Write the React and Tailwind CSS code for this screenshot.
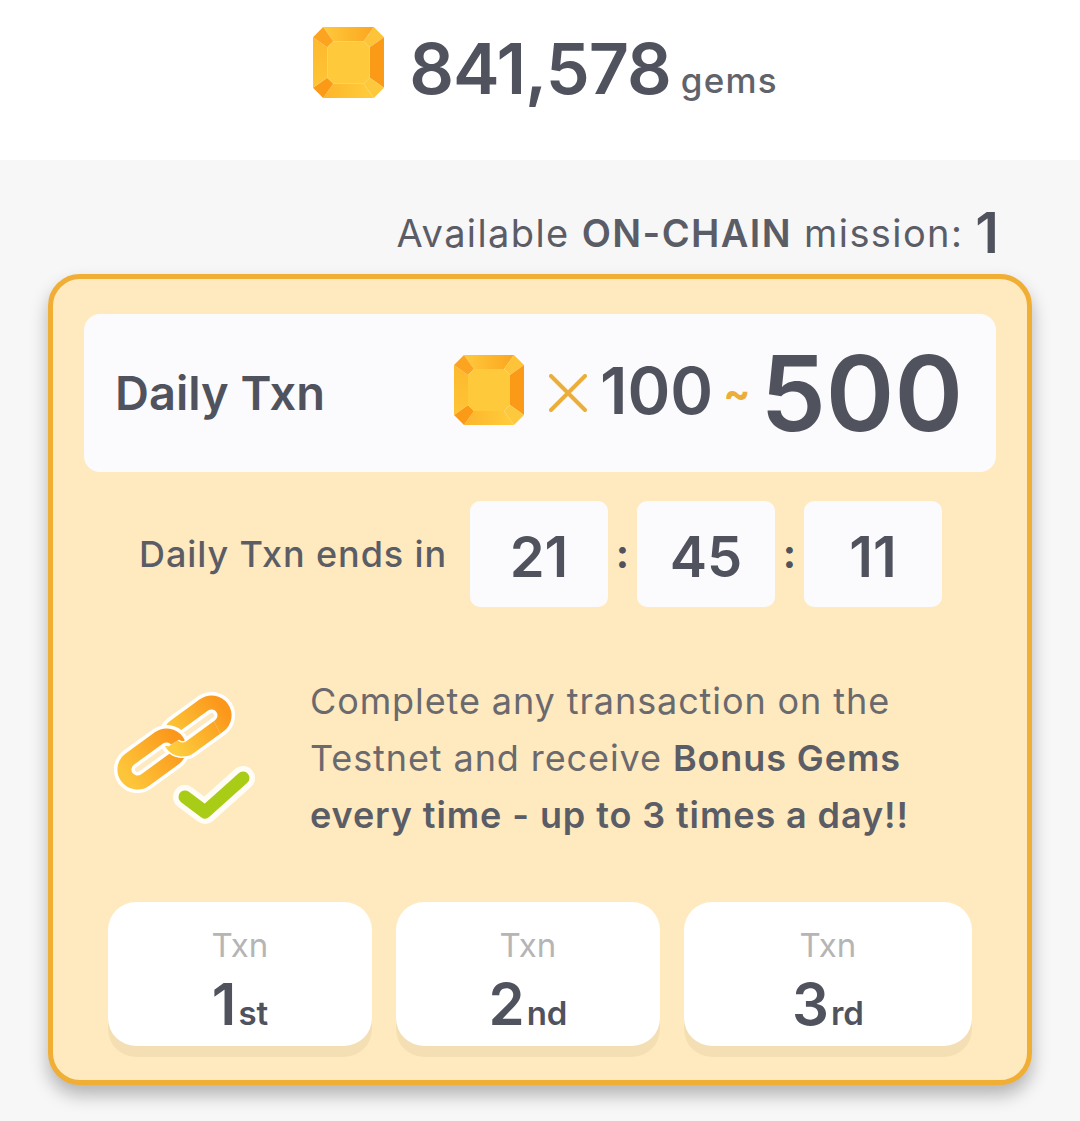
const FONT = "font-['Inter','Noto_Sans',sans-serif]";

function Gem({ className, id }) {
  return (
    <svg viewBox="0 0 70 70" className={className}>
      <defs>
        <linearGradient id={id + "t"} x1="0" x2="1" y1="0" y2="0">
          <stop offset="0" stopColor="#ffc93c" />
          <stop offset="1" stopColor="#fba61f" />
        </linearGradient>
        <linearGradient id={id + "b"} x1="0" x2="1" y1="0" y2="0">
          <stop offset="0" stopColor="#fdb52b" />
          <stop offset="1" stopColor="#ffcd3d" />
        </linearGradient>
        <linearGradient id={id + "l"} x1="0" x2="0" y1="0" y2="1">
          <stop offset="0" stopColor="#fdb92d" />
          <stop offset="1" stopColor="#ffc436" />
        </linearGradient>
      </defs>
      <polygon points="10,0 60,0 50,14 20,14" fill={`url(#${id}t)`} />
      <polygon points="60,0 70,10 56,20 50,14" fill="#fdc339" />
      <polygon points="70,10 70,60 56,50 56,20" fill="#fb9a17" />
      <polygon points="70,60 60,70 50,56 56,50" fill="#fdc93c" />
      <polygon points="60,70 10,70 20,56 50,56" fill={`url(#${id}b)`} />
      <polygon points="10,70 0,60 14,50 20,56" fill="#fb9a17" />
      <polygon points="0,60 0,10 14,20 14,50" fill={`url(#${id}l)`} />
      <polygon points="0,10 10,0 20,14 14,20" fill="#fca31f" />
      <polygon points="20,14 50,14 56,20 56,50 50,56 20,56 14,50 14,20" fill="#fec93a" />
    </svg>
  );
}

function Chain() {
  const link = (cx, cy, stroke, w) => (
    <g transform={`translate(${cx} ${cy}) rotate(-36)`}>
      <rect x="-31" y="-13" width="62" height="26" rx="13" fill="none" stroke={stroke} strokeWidth={w} />
    </g>
  );
  return (
    <svg viewBox="0 0 150 150" className="w-[150px] h-[150px] shrink-0">
      <defs>
        <linearGradient id="lk1" x1="0" x2="1" y1="0" y2="0">
          <stop offset="0" stopColor="#fdcb3c" />
          <stop offset="1" stopColor="#fb981b" />
        </linearGradient>
        <linearGradient id="lk2" x1="0" x2="1" y1="0" y2="0">
          <stop offset="0" stopColor="#fdc53a" />
          <stop offset="1" stopColor="#fb981b" />
        </linearGradient>
        <clipPath id="front">
          <polygon points="28.5,78.5 104.5,30.5 140,100 60,140" />
        </clipPath>
      </defs>
      {link(89, 38, "#fff", 21)}
      {link(89, 38, "url(#lk1)", 14)}
      {link(44, 71, "#fff", 21)}
      {link(44, 71, "url(#lk2)", 14)}
      <g clipPath="url(#front)">
        {link(89, 38, "#fff", 17)}
        {link(89, 38, "url(#lk1)", 14)}
      </g>
      <path d="M77 109 L 97 124 L 135 90" fill="none" stroke="#fffdf5" strokeWidth="24" strokeLinecap="round" strokeLinejoin="round" />
      <path d="M77 109 L 97 124 L 135 90" fill="none" stroke="#a9cc17" strokeWidth="13" strokeLinecap="round" strokeLinejoin="round" />
    </svg>
  );
}

function TimeBox({ v }) {
  return (
    <div className="w-[138px] h-[106px] rounded-[10px] bg-[#fbfbfd] flex items-center justify-center pt-[6px] text-[56px] font-semibold text-[#50535e]">
      {v}
    </div>
  );
}

function Txn({ n, s, className }) {
  return (
    <div className={`h-[144px] rounded-[28px] bg-white shadow-[0_11px_0_0_#f3dfb3] flex flex-col items-center pt-[24px] ${className}`}>
      <div className="text-[33px] leading-[38px] text-[#b5b5b5]">Txn</div>
      <div className="mt-[10px] flex items-baseline text-[#50535e] leading-[60px] font-semibold">
        <span className="text-[58px]">{n}</span>
        <span className="text-[33px] ml-[2px]">{s}</span>
      </div>
    </div>
  );
}

export default function App() {
  return (
    <div className={`w-[1080px] h-[1121px] bg-[#f7f7f8] overflow-hidden ${FONT}`}>
      <header className="h-[160px] bg-white flex items-center justify-center pb-[22px] pl-[11px]">
        <Gem id="g1" className="w-[71px] h-[71px] mb-[14px]" />
        <span className="ml-[25px] text-[70px] font-semibold tracking-[-1px] text-[#50535e] leading-none">841,578</span>
        <span className="ml-[10px] mt-[22px] text-[35px] font-medium text-[#60636c] tracking-[1.2px] leading-none">gems</span>
      </header>

      <div className="h-[114px] flex items-center justify-end pr-[81px] pt-[32px] text-[#5b5d66] text-[38px] tracking-[1.4px] leading-[56px]">
        <span>Available <b className="font-semibold">ON-CHAIN</b> mission:</span>
        <span className="ml-[12px] text-[56px] tracking-normal font-semibold text-[#50535e]">1</span>
      </div>

      <main className="mx-[48px] h-[811px] rounded-[32px] border-[5px] border-[#f0ae35] bg-[#ffe9bf] shadow-[0_10px_18px_rgba(0,0,0,0.28)] px-[31px] pt-[35px] flex flex-col">
        <section className="h-[158px] rounded-[16px] bg-[#fbfbfd] flex items-center pl-[31px] pr-[33px]">
          <span className="text-[47px] font-semibold text-[#50535e]">Daily Txn</span>
          <div className="ml-auto flex items-center">
            <Gem id="g2" className="w-[70px] h-[70px] mb-[6px]" />
            <svg viewBox="0 0 38 38" className="w-[38px] h-[38px] ml-[25px]">
              <path d="M2 2 L36 36 M36 2 L2 36" stroke="#ecae3a" strokeWidth="4" strokeLinecap="round" />
            </svg>
            <span className="ml-[13px] mb-[6px] text-[65px] font-semibold text-[#50535e] leading-none">100</span>
            <span className="ml-[10px] text-[40px] font-bold text-[#ecae3a] leading-none">~</span>
            <span className="ml-[10px] text-[104px] font-semibold text-[#50535e] leading-none">500</span>
          </div>
        </section>

        <section className="mt-[29px] flex items-center pl-[55px]">
          <span className="text-[36px] font-medium tracking-[0.9px] text-[#5b5d66] w-[331px]">Daily Txn ends in</span>
          <TimeBox v="21" />
          <span className="w-[29px] text-center text-[40px] font-bold text-[#50535e]">:</span>
          <TimeBox v="45" />
          <span className="w-[29px] text-center text-[40px] font-bold text-[#50535e]">:</span>
          <TimeBox v="11" />
        </section>

        <section className="mt-[66px] h-[171px] flex items-start pl-[24px]">
          <div className="mt-[15px]"><Chain /></div>
          <p className="ml-[52px] text-[36px] leading-[57px] tracking-[0.9px] text-[#6a6a6e] whitespace-nowrap">
            Complete any transaction on the<br />
            Testnet and receive <b className="font-semibold text-[#5b5d66]">Bonus Gems</b><br />
            <b className="font-semibold text-[#5b5d66]">every time - up to 3 times a day!!</b>
          </p>
        </section>

        <section className="mt-[58px] flex gap-[24px] px-[24px]">
          <Txn n="1" s="st" className="w-[264px]" />
          <Txn n="2" s="nd" className="w-[264px]" />
          <Txn n="3" s="rd" className="w-[288px]" />
        </section>
      </main>
    </div>
  );
}
